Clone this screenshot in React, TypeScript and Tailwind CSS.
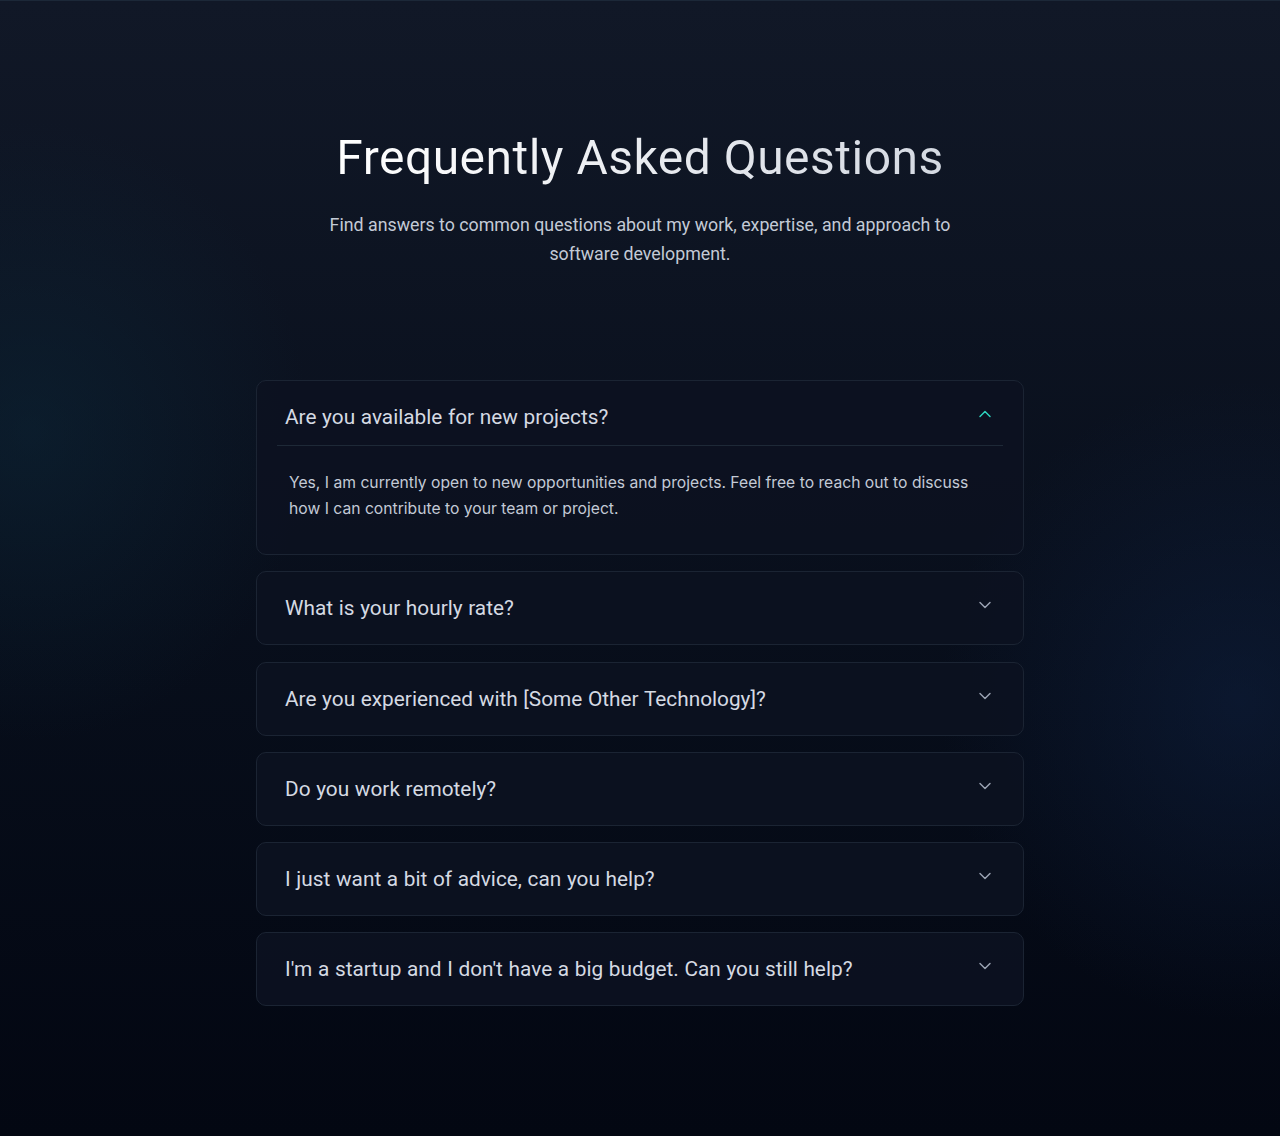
import { useState } from "react";
import { ChevronDown, ChevronUp } from "lucide-react";

const faqs = [
  {
    q: "Are you available for new projects?",
    a: "Yes, I am currently open to new opportunities and projects. Feel free to reach out to discuss how I can contribute to your team or project.",
  },
  {
    q: "What is your hourly rate?",
    a: "My rate depends on the scope and complexity of the project. Get in touch and we can work out something that fits.",
  },
  {
    q: "Are you experienced with [Some Other Technology]?",
    a: "I pick up new tools quickly and have worked across a wide range of stacks.",
  },
  {
    q: "Do you work remotely?",
    a: "Yes, I work remotely with teams across different time zones.",
  },
  {
    q: "I just want a bit of advice, can you help?",
    a: "Of course. Send me a message and I'll be happy to share my thoughts.",
  },
  {
    q: "I'm a startup and I don't have a big budget. Can you still help?",
    a: "Absolutely. Let's talk about your goals and find an approach that works for you.",
  },
];

export default function App() {
  const [open, setOpen] = useState<number | null>(0);

  return (
    <div
      className="relative min-h-[1136px] overflow-hidden border-t border-[#1c2838] bg-gradient-to-b from-[#111827] to-[#030712]"
      style={{ fontFamily: "Roboto, 'Liberation Sans', sans-serif" }}
    >
      {/* background glows */}
      <div className="pointer-events-none absolute left-[-250px] top-[120px] h-[620px] w-[560px] rounded-full bg-[radial-gradient(closest-side,rgba(12,42,60,0.45),rgba(12,42,60,0))]" />
      <div className="pointer-events-none absolute right-[-260px] top-[380px] h-[640px] w-[600px] rounded-full bg-[radial-gradient(closest-side,rgba(16,36,72,0.45),rgba(16,36,72,0))]" />

      <div className="relative mx-auto flex max-w-3xl flex-col items-center pt-[125px]">
        <h1 className="text-[48px] font-normal leading-[64px] tracking-[0.01em] bg-gradient-to-r from-white to-[#d4d9e2] bg-clip-text text-transparent">
          Frequently Asked Questions
        </h1>
        <p className="mt-[20px] max-w-[640px] text-center text-[17.8px] leading-[29px] text-[#c3cad6]">
          Find answers to common questions about my work, expertise, and approach to software development.
        </p>

        <div className="mt-[112px] flex w-full flex-col gap-[16.3px]">
          {faqs.map((item, i) => {
            const isOpen = open === i;
            return (
              <div
                key={i}
                className="rounded-[10px] border border-[#1b2433] bg-[#0c1220]/90"
              >
                <button
                  onClick={() => setOpen(isOpen ? null : i)}
                  className={`flex w-full items-start justify-between px-7 pt-[22px] text-left ${
                    isOpen ? "pb-[14px]" : "pb-[22px]"
                  }`}
                >
                  <span className="text-[20.8px] leading-[28px] text-[#d5dae3] [word-spacing:0.5px]">{item.q}</span>
                  <span className="mt-[1px]">
                    {isOpen ? (
                      <ChevronUp size={20} strokeWidth={1.75} className="text-[#2dd4bf]" />
                    ) : (
                      <ChevronDown size={20} strokeWidth={1.75} className="text-[#9aa3b2]" />
                    )}
                  </span>
                </button>
                {isOpen && (
                  <div className="mx-5 border-t border-[#1e2937] px-3 pb-8 pt-6">
                    <p
                      className="text-[15.7px] leading-[26px] text-[#c3cad6]"
                      style={{ fontFamily: "Inter, 'Noto Sans', sans-serif" }}
                    >
                      {item.a}
                    </p>
                  </div>
                )}
              </div>
            );
          })}
        </div>
      </div>
    </div>
  );
}
